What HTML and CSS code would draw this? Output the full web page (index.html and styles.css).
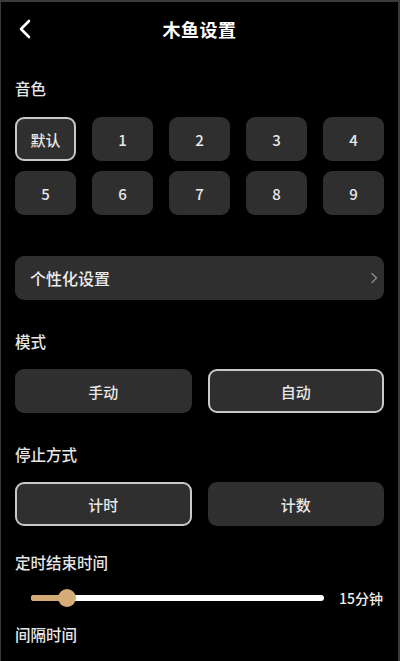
FILE: index.html
```html
<!DOCTYPE html>
<html lang="zh">
<head>
<meta charset="utf-8">
<link rel="stylesheet" href="styles.css">
</head>
<body>
<div class="screen">
  <header class="header">
    <svg class="back" width="14" height="20" viewBox="0 0 14 20"><path d="M11 2 L3 10 L11 18" fill="none" stroke="#fff" stroke-width="2.6" stroke-linecap="round" stroke-linejoin="round"/></svg>
    <h1 class="title">木鱼设置</h1>
  </header>

  <div class="label label-first">音色</div>
  <div class="tones">
    <div class="btn selected">默认</div>
    <div class="btn">1</div>
    <div class="btn">2</div>
    <div class="btn">3</div>
    <div class="btn">4</div>
    <div class="btn">5</div>
    <div class="btn">6</div>
    <div class="btn">7</div>
    <div class="btn">8</div>
    <div class="btn">9</div>
  </div>

  <div class="row-link">
    <span>个性化设置</span>
    <svg class="chev" width="8" height="12" viewBox="0 0 8 12"><path d="M2 1.5 L6.5 6 L2 10.5" fill="none" stroke="#8a8a8a" stroke-width="1.5" stroke-linecap="round" stroke-linejoin="round"/></svg>
  </div>

  <div class="label label-mode">模式</div>
  <div class="pair">
    <div class="btn">手动</div>
    <div class="btn selected">自动</div>
  </div>

  <div class="label label-mode">停止方式</div>
  <div class="pair">
    <div class="btn selected">计时</div>
    <div class="btn">计数</div>
  </div>

  <div class="label label-timer">定时结束时间</div>
  <div class="slider-row">
    <div class="track">
      <div class="fill" style="width: 36px"></div>
      <div class="thumb" style="left: 36px"></div>
    </div>
    <span class="value">15分钟</span>
  </div>

  <div class="label label-interval">间隔时间</div>
</div>
</body>
</html>
```

FILE: styles.css
```css
* { box-sizing: border-box; }
html, body {
  margin: 0;
  padding: 0;
  background: #000;
}
body {
  font-family: "Noto Sans CJK SC", "Noto Sans", sans-serif;
  color: #ececec;
}
.screen {
  width: 400px;
  height: 661px;
  overflow: hidden;
  background: #000;
  border-top: 2px solid #3a3a3a;
  border-left: 1px solid #3a3a3a;
  border-right: 2px solid #3a3a3a;
  padding: 0 14px 0 14px;
  display: flex;
  flex-direction: column;
}
.header {
  height: 54px;
  position: relative;
  display: flex;
  align-items: center;
  justify-content: center;
}
.back {
  position: absolute;
  left: 3px;
  top: 17px;
}
.title {
  margin: 0;
  font-size: 18px;
  font-weight: 700;
  color: #fff;
  letter-spacing: 0.5px;
}
.label {
  height: 20px;
  line-height: 20px;
  font-size: 15.5px;
  font-weight: 500;
  color: #e6e6e6;
}
.label-first { margin-top: 22px; }
.tones {
  margin-top: 19px;
  display: grid;
  grid-template-columns: repeat(5, 1fr);
  column-gap: 16px;
  row-gap: 10px;
}
.btn {
  height: 44px;
  border-radius: 9px;
  background: #2f2f2f;
  display: flex;
  align-items: center;
  justify-content: center;
  font-size: 15px;
  font-weight: 500;
  color: #e8e8e8;
}
.btn.selected {
  border: 2px solid #c9c9c9;
}
.row-link {
  margin-top: 41px;
  height: 44px;
  border-radius: 9px;
  background: #2f2f2f;
  display: flex;
  align-items: center;
  justify-content: space-between;
  padding: 0 6px 0 15px;
  font-size: 16px;
  font-weight: 500;
  color: #ececec;
}
.label-mode { margin-top: 31px; }
.pair {
  margin-top: 18px;
  display: grid;
  grid-template-columns: 1fr 1fr;
  column-gap: 16px;
}
.label-timer { margin-top: 26px; }
.slider-row {
  margin-top: 16px;
  height: 20px;
  display: flex;
  align-items: center;
  padding-left: 16px;
}
.track {
  position: relative;
  width: 293px;
  height: 6px;
  border-radius: 3px;
  background: #fff;
}
.fill {
  position: absolute;
  left: 0;
  top: 0;
  height: 6px;
  border-radius: 3px 0 0 3px;
  background: #d2a874;
}
.thumb {
  position: absolute;
  top: 3px;
  width: 18px;
  height: 18px;
  margin: -9px 0 0 -9px;
  border-radius: 50%;
  background: #d6ad78;
}
.value {
  margin-left: auto;
  margin-right: 1px;
  font-size: 14px;
  font-weight: 500;
  color: #ececec;
}
.label-interval { margin-top: 16px; }
```
